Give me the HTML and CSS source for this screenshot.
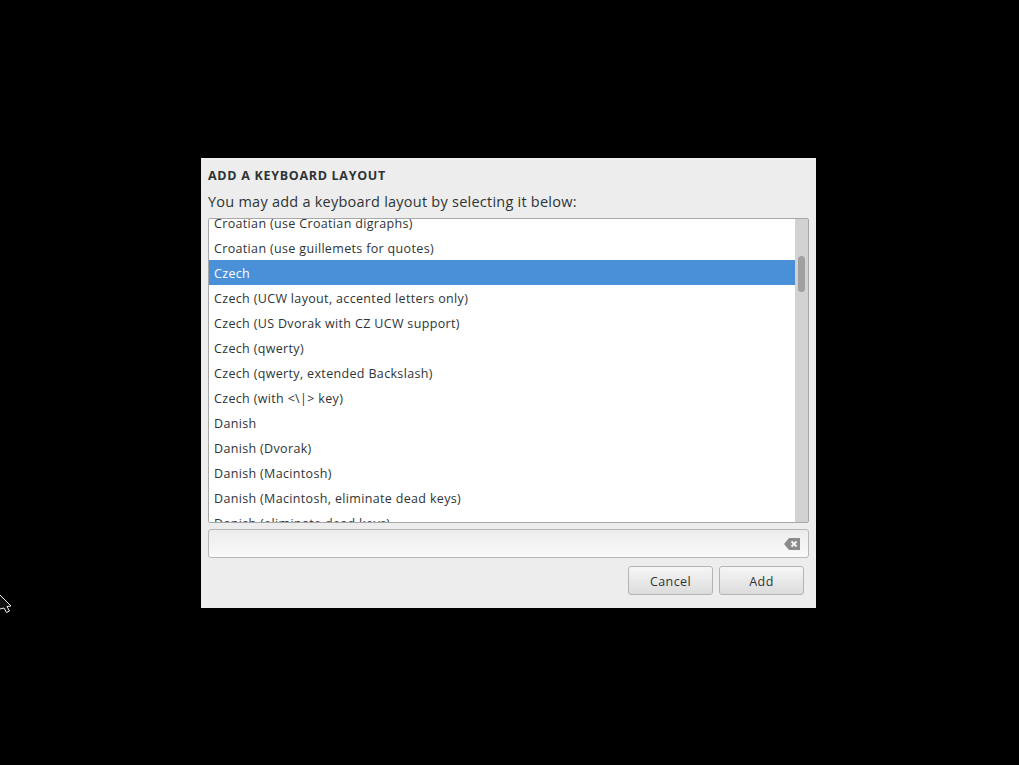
FILE: index.html
```html
<!DOCTYPE html>
<html lang="en">
<head>
  <meta charset="UTF-8">
  <title>Add a Keyboard Layout</title>
  <link rel="stylesheet" href="styles.css">
</head>
<body>
  <div class="dialog">
    <h2 class="dialog-title">ADD A KEYBOARD LAYOUT</h2>
    <p class="dialog-label">You may add a keyboard layout by selecting it below:</p>

    <!-- Layout list -->
    <div class="list-box">
      <ul class="layout-list">
        <li>Croatian (use Croatian digraphs)</li>
        <li>Croatian (use guillemets for quotes)</li>
        <li class="selected">Czech</li>
        <li>Czech (UCW layout, accented letters only)</li>
        <li>Czech (US Dvorak with CZ UCW support)</li>
        <li>Czech (qwerty)</li>
        <li>Czech (qwerty, extended Backslash)</li>
        <li>Czech (with &lt;\|&gt; key)</li>
        <li>Danish</li>
        <li>Danish (Dvorak)</li>
        <li>Danish (Macintosh)</li>
        <li>Danish (Macintosh, eliminate dead keys)</li>
        <li>Danish (eliminate dead keys)</li>
      </ul>
      <div class="scrollbar"><div class="scroll-thumb"></div></div>
    </div>

    <!-- Search entry -->
    <div class="search-entry">
      <svg class="clear-icon" width="16" height="12" viewBox="0 0 16 12">
        <path d="M0 6 L5 0 H16 V12 H5 Z" fill="#8a8c8a"/>
        <path d="M7.5 3.5 L12.5 8.5 M12.5 3.5 L7.5 8.5" stroke="#f4f4f4" stroke-width="2"/>
      </svg>
    </div>

    <div class="dialog-buttons">
      <button class="btn">Cancel</button>
      <button class="btn">Add</button>
    </div>
  </div>

  <!-- Mouse pointer at the screen edge -->
  <svg class="pointer" width="12" height="20" viewBox="0 0 12 20">
    <path d="M0 1 L11 12 L7 12.5 L9.5 17 L6.5 18.5 L4 14 L0 15" fill="#111" stroke="#eee" stroke-width="1"/>
  </svg>
</body>
</html>
```

FILE: styles.css
```css
/* Reset & Base Styles */
* {
  box-sizing: border-box;
  margin: 0;
  padding: 0;
}
body {
  font-family: "Open Sans", "Noto Sans", sans-serif;
  background: #000;
  color: #2e3436;
  width: 1019px;
  height: 765px;
  overflow: hidden;
  position: relative;
  padding: 158px 0 0 201px;
}
/* Dialog */
.dialog {
  background: #ededed;
  width: 615px;
  height: 450px;
  padding: 0 7px;
}
.dialog-title {
  font-size: 12.5px;
  font-weight: 700;
  line-height: 16px;
  padding-top: 10px;
  height: 25px;
  letter-spacing: 0.7px;
}
.dialog-label {
  font-size: 14.5px;
  line-height: 20px;
  margin-top: 9px;
  letter-spacing: 0.24px;
}
/* List */
.list-box {
  display: flex;
  width: 601px;
  height: 305px;
  margin-top: 6px;
  background: #fff;
  border: 1px solid #a7a7a7;
  border-radius: 2px;
  overflow: hidden;
}
.layout-list {
  list-style: none;
  flex: 1;
  margin-top: -9px;
  font-size: 12.5px;
  letter-spacing: 0.34px;
}
.layout-list li {
  height: 25px;
  line-height: 27px;
  padding-left: 5px;
}
.layout-list .selected {
  background: #4a90d9;
  color: #fff;
}
.scrollbar {
  width: 13px;
  background: #d2d2d2;
  padding: 37px 3px 0;
}
.scroll-thumb {
  width: 7px;
  height: 36px;
  background: #a0a0a0;
  border-radius: 4px;
}
/* Entry */
.search-entry {
  display: flex;
  align-items: center;
  justify-content: flex-end;
  width: 601px;
  height: 29px;
  margin-top: 6px;
  padding-right: 8px;
  border: 1px solid #b8b8b8;
  border-radius: 3px;
  background: linear-gradient(#ececec, #fafafa);
}
/* Buttons */
.dialog-buttons {
  display: flex;
  justify-content: flex-end;
  gap: 6px;
  margin-top: 8px;
  padding-right: 5px;
}
.btn {
  width: 85px;
  height: 29px;
  padding-top: 2px;
  font-family: inherit;
  font-size: 12.5px;
  letter-spacing: 0.42px;
  color: #2e3436;
  border: 1px solid #b4b4b4;
  border-radius: 3px;
  background: linear-gradient(#f6f6f6, #dcdcdc);
}
.pointer {
  position: absolute;
  left: 0;
  top: 594px;
}
```
